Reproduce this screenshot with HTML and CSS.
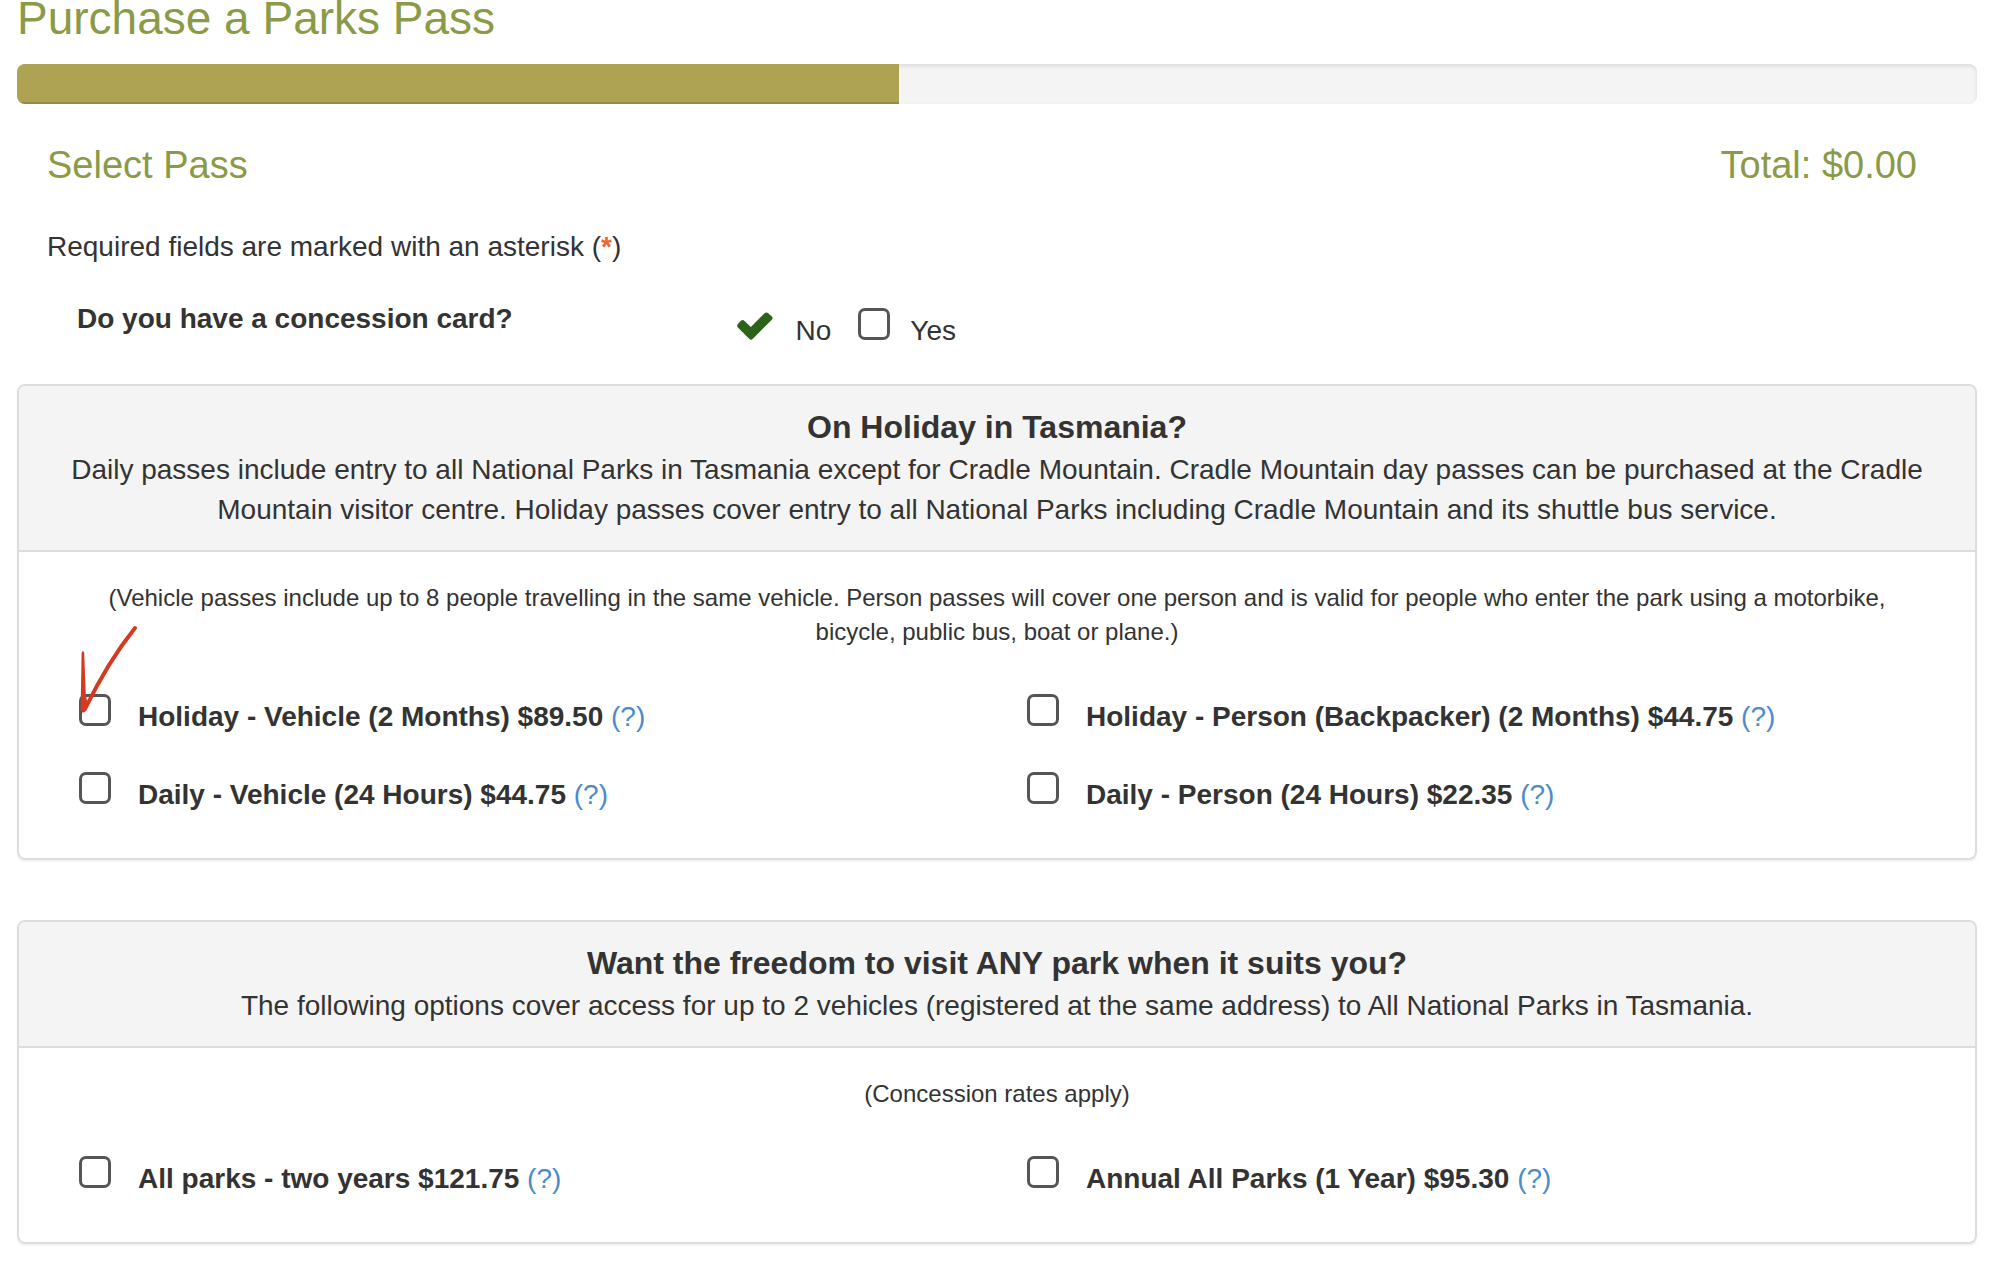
FILE: index.html
```html
<!DOCTYPE html>
<html lang="en">

<head>
    <meta charset="UTF-8">
    <meta name="viewport" content="width=device-width, initial-scale=1.0">
    <title>Purchase a Parks Pass</title>
    <link rel="stylesheet" href="styles.css">
</head>

<body>
    <main class="page">
        <h1>Purchase a Parks Pass</h1>

        <!-- Progress through the purchase steps -->
        <div class="progress" role="progressbar" aria-valuenow="45" aria-valuemin="0" aria-valuemax="100">
            <div class="progress-bar" style="width: 45%"></div>
        </div>

        <form>
            <div class="step-header">
                <h2>Select Pass</h2>
                <h2>Total: $0.00</h2>
            </div>
            <p class="required-note">Required fields are marked with an asterisk (<span class="asterisk">*</span>)</p>

            <!-- Concession card question -->
            <div class="question" role="radiogroup" aria-labelledby="concession-label">
                <div class="question-label" id="concession-label">Do you have a concession card?</div>
                <div class="answers">
                    <span class="tick">
                        <input type="radio" class="box" name="concession" id="concession-no" checked>
                        <svg class="tick-icon" viewBox="0 0 36 28" aria-hidden="true">
                            <path d="M0.8 12 L4.2 8.6 Q5.7 7.4 7.3 8.7 L13.8 15 L27.6 1.2 Q29.5 -0.4 31.2 1.2 L34.9 4.6 Q36.4 6.2 34.8 7.8 L15.6 27 Q14 28.3 12.4 27 L0.9 15.6 Q-0.5 13.8 0.8 12 Z"/>
                        </svg>
                    </span>
                    <label for="concession-no">No</label>
                    <input type="radio" class="box" name="concession" id="concession-yes">
                    <label for="concession-yes">Yes</label>
                </div>
            </div>

            <!-- Holiday passes -->
            <section class="panel">
                <div class="panel-heading">
                    <h3>On Holiday in Tasmania?</h3>
                    <p>Daily passes include entry to all National Parks in Tasmania except for Cradle Mountain. Cradle Mountain day passes can be purchased at the Cradle Mountain visitor centre. Holiday passes cover entry to all National Parks including Cradle Mountain and its shuttle bus service.</p>
                </div>
                <div class="panel-body">
                    <p class="note">(Vehicle passes include up to 8 people travelling in the same vehicle. Person passes will cover one person and is valid for people who enter the park using a motorbike, bicycle, public bus, boat or plane.)</p>
                    <div class="passes">
                        <div class="pass">
                            <input type="checkbox" class="box" id="holiday-vehicle">
                            <div><label for="holiday-vehicle">Holiday - Vehicle (2 Months) $89.50</label> <a href="#">(?)</a></div>
                            <svg class="arrow" viewBox="0 0 60 90" aria-hidden="true">
                                <path class="arrow-line" d="M56 7 C40 27 22 55 6 88"/>
                                <path class="arrow-head" d="M2.6 32 Q4 28 5.2 32 L6.8 74 L9 84 L7.5 89 Q6 92 3 91.5 Q1.6 91 1.6 88 Z"/>
                            </svg>
                        </div>
                        <div class="pass">
                            <input type="checkbox" class="box" id="holiday-person">
                            <div><label for="holiday-person">Holiday - Person (Backpacker) (2 Months) $44.75</label> <a href="#">(?)</a></div>
                        </div>
                        <div class="pass">
                            <input type="checkbox" class="box" id="daily-vehicle">
                            <div><label for="daily-vehicle">Daily - Vehicle (24 Hours) $44.75</label> <a href="#">(?)</a></div>
                        </div>
                        <div class="pass">
                            <input type="checkbox" class="box" id="daily-person">
                            <div><label for="daily-person">Daily - Person (24 Hours) $22.35</label> <a href="#">(?)</a></div>
                        </div>
                    </div>
                </div>
            </section>

            <!-- All parks passes -->
            <section class="panel">
                <div class="panel-heading">
                    <h3>Want the freedom to visit ANY park when it suits you?</h3>
                    <p>The following options cover access for up to 2 vehicles (registered at the same address) to All National Parks in Tasmania.</p>
                </div>
                <div class="panel-body">
                    <p class="note">(Concession rates apply)</p>
                    <div class="passes">
                        <div class="pass">
                            <input type="checkbox" class="box" id="all-two-years">
                            <div><label for="all-two-years">All parks - two years $121.75</label> <a href="#">(?)</a></div>
                        </div>
                        <div class="pass">
                            <input type="checkbox" class="box" id="all-annual">
                            <div><label for="all-annual">Annual All Parks (1 Year) $95.30</label> <a href="#">(?)</a></div>
                        </div>
                    </div>
                </div>
            </section>
        </form>
    </main>
</body>

</html>
```
FILE: styles.css
```css
/* General styles */
* {
    box-sizing: border-box;
}

body {
    margin: 0;
    font-family: "Liberation Sans", Arial, sans-serif;
    font-size: 28px;
    line-height: 40px;
    color: #333;
    background-color: #fff;
}

h1, h2, h3, p {
    margin: 0;
}

h1, h2 {
    color: #8a9a46;
    font-weight: normal;
}

h1 {
    font-size: 46px;
    line-height: 36px;
}

h2 {
    font-size: 38px;
    line-height: 42px;
}

a {
    color: #4b8bca;
    text-decoration: none;
}

.page {
    padding: 0 19px 0 17px;
}

/* Progress bar */
.progress {
    height: 40px;
    margin-top: 28px;
    overflow: hidden;
    background-color: #f4f4f4;
    border-radius: 8px;
    box-shadow: inset 0 2px 4px rgba(0, 0, 0, 0.1);
}

.progress-bar {
    height: 100%;
    background-color: #ada353;
    box-shadow: inset 0 -2px 0 rgba(0, 0, 0, 0.15);
}

/* Step title and running total */
.step-header {
    display: flex;
    justify-content: space-between;
    padding: 40px 60px 0 30px;
}

.required-note {
    margin-top: 41px;
    padding: 0 30px;
}

.asterisk {
    color: #ee6633;
    font-weight: bold;
}

/* Concession card question */
.question {
    display: grid;
    grid-template-columns: 35% 1fr;
    column-gap: 5px;
    padding: 32px 30px 33px 60px;
}

.question-label {
    font-weight: bold;
}

.answers {
    display: flex;
    align-items: baseline;
    margin-top: 9px;
}

.answers label {
    margin: 0 27px 0 20px;
}

/* Square check box, used for radios as well */
.box {
    appearance: none;
    flex: none;
    width: 32px;
    height: 32px;
    margin: 0;
    border: 3px solid #555;
    border-radius: 7px;
    background-color: #fff;
}

.tick {
    display: grid;
    align-items: end;
    width: 39px;
}

.tick > * {
    grid-area: 1 / 1;
}

.tick .box:checked {
    border-color: transparent;
}

.tick-icon {
    width: 36px;
    height: 28px;
    fill: #2b6318;
}

/* Panels */
.panel {
    margin-bottom: 60px;
    border: 2px solid #ddd;
    border-radius: 8px;
    box-shadow: 0 2px 2px rgba(0, 0, 0, 0.05);
}

.panel-heading {
    padding: 20px 30px;
    text-align: center;
    background-color: #f4f4f4;
    border-bottom: 2px solid #ddd;
    border-radius: 6px 6px 0 0;
}

.panel-heading h3 {
    margin-bottom: 2px;
    font-size: 32px;
    line-height: 42px;
}

.panel-body {
    padding: 29px 30px 43px;
}

.note {
    padding: 0 30px;
    font-size: 24px;
    line-height: 34px;
    text-align: center;
}

/* Pass options */
.passes {
    display: grid;
    grid-template-columns: 1fr 1fr;
    row-gap: 35px;
    margin-top: 45px;
}

.pass {
    position: relative;
    display: flex;
    align-items: baseline;
    gap: 27px;
    padding-left: 30px;
}

.pass label {
    font-weight: bold;
}

/* Red arrow drawn over the first option */
.arrow {
    position: absolute;
    left: 30px;
    bottom: 26px;
    width: 60px;
    height: 90px;
    overflow: visible;
    pointer-events: none;
}

.arrow-line {
    fill: none;
    stroke: #d33a20;
    stroke-width: 4;
    stroke-linecap: round;
}

.arrow-head {
    fill: #d33a20;
}
```
